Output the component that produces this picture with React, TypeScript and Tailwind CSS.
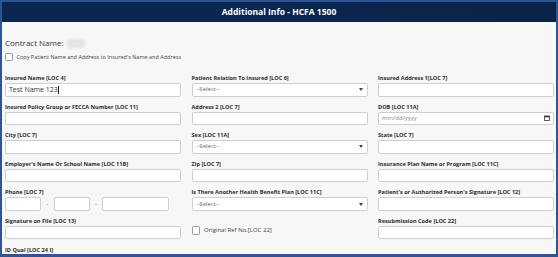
import React from "react";

const Label = ({ children }: { children: React.ReactNode }) => (
  <div className="h-[8px] leading-[8px] text-[5.6px] font-bold text-[#2b2b2b] whitespace-nowrap mb-[1px]">{children}</div>
);

const TextBox = ({ value, className = "" }: { value?: string; className?: string }) => (
  <div className={`h-[13.5px] bg-white border border-[#cfcfcf] rounded-[2px] flex items-center pl-[3px] text-[7px] text-[#333] ${className}`}>
    {value}
    {value ? <span className="inline-block w-[1px] h-[8px] bg-[#222] ml-[0.5px]" /> : null}
  </div>
);

const SelectBox = () => (
  <div className="h-[13.5px] bg-white border border-[#cfcfcf] rounded-[2px] flex items-center justify-between pl-[3px] pr-[4px] text-[6px] text-[#666]">
    <span>--Select--</span>
    <svg width="4" height="3" viewBox="0 0 4 3"><path d="M0 0H4L2 3Z" fill="#444" /></svg>
  </div>
);

const DateBox = () => (
  <div className="h-[13.5px] bg-white border border-[#cfcfcf] rounded-[2px] flex items-center justify-between pl-[3px] pr-[3px] text-[6px] text-[#888]">
    <span>mm/dd/yyyy</span>
    <svg width="6" height="6" viewBox="0 0 6 6">
      <rect x="0.5" y="1" width="5" height="4.5" fill="none" stroke="#333" strokeWidth="0.8" />
      <rect x="0.5" y="1" width="5" height="1.3" fill="#333" />
    </svg>
  </div>
);

const Field = ({ label, children }: { label: string; children: React.ReactNode }) => (
  <div className="flex flex-col">
    <Label>{label}</Label>
    {children}
  </div>
);

export default function App() {
  return (
    <div className="w-[558px] h-[257px] bg-[#2c5596] p-[2px] pr-[2px] pb-[3px]" style={{ fontFamily: '"Open Sans", sans-serif' }}>
      <div className="w-full h-full bg-[#f7f7f7] flex flex-col overflow-hidden">
        <div className="h-[20px] shrink-0 bg-gradient-to-r from-[#0b2650] via-[#0b2650] to-[#0a2348] flex items-center justify-center text-white font-bold text-[8.5px]">
          Additional Info - HCFA 1500
        </div>
        <div className="pl-[3px] pt-[15px]">
          <div className="h-[12px] flex items-center text-[8px] text-[#333] leading-[12px]">
            <span>Contract Name:</span>
            <span className="ml-[3px] inline-block w-[18px] h-[9px] bg-[#e4e4e4] rounded-[2px] blur-[1px]" />
          </div>
          <div className="mt-[4px] h-[8px] flex items-center">
            <span className="inline-block w-[8px] h-[8px] border border-[#999] rounded-[1.5px] bg-white" />
            <span className="ml-[3.5px] text-[5.5px] text-[#444] leading-[8px]">Copy Patient Name and Address to Insured's Name and Address</span>
          </div>
          <div className="mt-[13px] grid grid-cols-[176px_176px_176px] gap-x-[10.5px] gap-y-[6.1px]">
            <Field label="Insured Name [LOC 4]"><TextBox value="Test Name 123" /></Field>
            <Field label="Patient Relation To Insured [LOC 6]"><SelectBox /></Field>
            <Field label="Insured Address 1[LOC 7]"><TextBox /></Field>

            <Field label="Insured Policy Group or FECCA Number [LOC 11]"><TextBox /></Field>
            <Field label="Address 2 [LOC 7]"><TextBox /></Field>
            <Field label="DOB [LOC 11A]"><DateBox /></Field>

            <Field label="City [LOC 7]"><TextBox /></Field>
            <Field label="Sex [LOC 11A]"><SelectBox /></Field>
            <Field label="State [LOC 7]"><TextBox /></Field>

            <Field label="Employer's Name Or School Name [LOC 11B]"><TextBox /></Field>
            <Field label="Zip [LOC 7]"><TextBox /></Field>
            <Field label="Insurance Plan Name or Program [LOC 11C]"><TextBox /></Field>

            <Field label="Phone [LOC 7]">
              <div className="flex items-center">
                <TextBox className="w-[36px]" />
                <span className="w-[13px] text-center text-[6px] text-[#555]">-</span>
                <TextBox className="w-[36px]" />
                <span className="w-[12px] text-center text-[6px] text-[#555]">-</span>
                <TextBox className="w-[67px]" />
              </div>
            </Field>
            <Field label="Is There Another Health Benefit Plan [LOC 11C]"><SelectBox /></Field>
            <Field label="Patient's or Authorized Person's Signature [LOC 12]"><TextBox /></Field>

            <Field label="Signature on File [LOC 13]"><TextBox /></Field>
            <div className="flex flex-col">
              <div className="h-[9px]" />
              <div className="flex items-center h-[9px]">
                <span className="inline-block w-[8.5px] h-[8.5px] border border-[#999] rounded-[1.5px] bg-white" />
                <span className="ml-[4px] text-[6px] text-[#444]">Original Ref No.[LOC 22]</span>
              </div>
            </div>
            <Field label="Resubmission Code [LOC 22]"><TextBox /></Field>

            <Field label="ID Qual [LOC 24 I]"><div /></Field>
          </div>
        </div>
      </div>
    </div>
  );
}
